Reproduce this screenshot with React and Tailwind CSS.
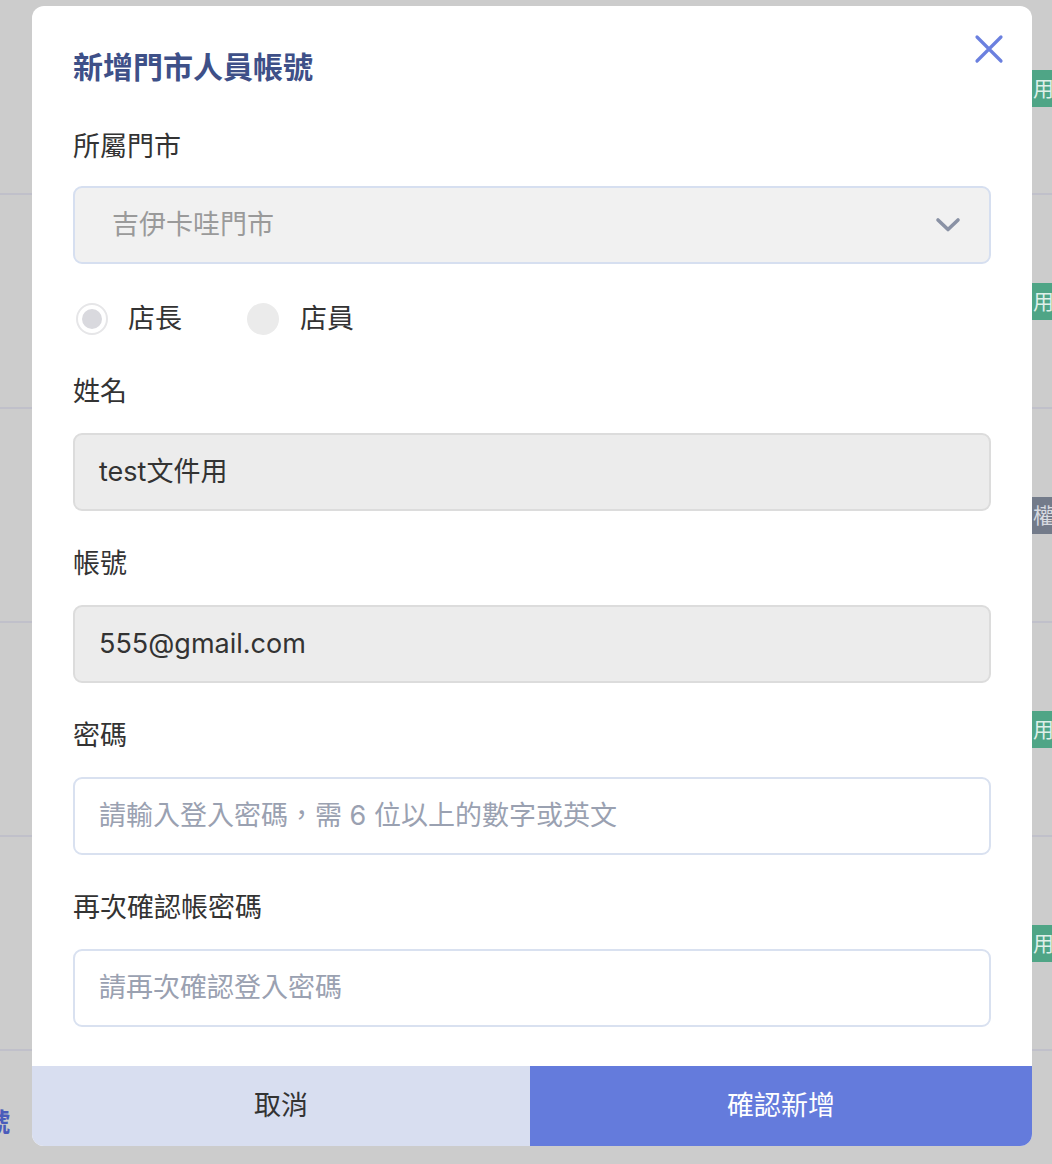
import React from "react";

const font = {
  fontFamily: '"Inter", "Noto Sans CJK TC", sans-serif',
};

function Badge({ text, gray }) {
  return (
    <div
      className={`h-[37px] w-[60px] flex items-center pl-[1px] text-[21px] leading-none ${
        gray ? "bg-[#737b8a] text-[#d7dae0]" : "bg-[#4fa586] text-[#dff0e9]"
      }`}
    >
      {text}
    </div>
  );
}

function BgRow({ h, badge, gray, children, last }) {
  return (
    <div
      className={`flex items-center ${last ? "" : "border-b-2 border-[#c0c0ca]"}`}
      style={{ height: h }}
    >
      <div className="flex-1">{children}</div>
      {badge && (
        <div className="w-[20px] overflow-hidden">
          <Badge text={badge} gray={gray} />
        </div>
      )}
    </div>
  );
}

function Label({ children, mb = "mb-[23px]" }) {
  return (
    <div className={`h-[36px] leading-[36px] text-[27px] text-[#333333] ${mb}`}>
      {children}
    </div>
  );
}

export default function App() {
  return (
    <div
      className="relative w-[1052px] h-[1164px] overflow-hidden bg-[#cccccc]"
      style={font}
    >
      {/* background table */}
      <div className="flex flex-col">
        <div className="flex items-start h-[195px] border-b-2 border-[#c0c0ca]">
          <div className="flex-1" />
          <div className="w-[20px] overflow-hidden mt-[70px]">
            <Badge text="用" />
          </div>
        </div>
        <BgRow h={214} badge="用" />
        <BgRow h={214} badge="權" gray />
        <BgRow h={214} badge="用" />
        <BgRow h={214} badge="用" />
        <div className="h-[120px] flex items-center">
          <div className="-ml-[16px] pt-[22px] text-[26px] font-bold text-[#4a5cbb]">
            號
          </div>
        </div>
      </div>

      {/* modal */}
      <div className="absolute left-[32px] top-[6px] w-[1000px] h-[1140px] bg-white rounded-[12px] overflow-hidden flex flex-col">
        <div className="flex-1 px-[41px] pt-[43px] relative">
          <button className="absolute right-[27px] top-[27px] w-[32px] h-[32px] flex items-center justify-center">
            <svg width="30" height="30" viewBox="0 0 30 30">
              <path
                d="M3 3 L27 27 M27 3 L3 27"
                stroke="#6b80df"
                strokeWidth="3.2"
                strokeLinecap="round"
                fill="none"
              />
            </svg>
          </button>
          <div className="h-[36px] leading-[36px] text-[30px] font-bold text-[#3e5088] mb-[44px]">
            新增門市人員帳號
          </div>

          <Label mb="mb-[21px]">所屬門市</Label>
          <div className="h-[78px] rounded-[9px] border-2 border-[#d6dff0] bg-[#f1f1f1] flex items-center pl-[37px] pr-[28px]">
            <div className="flex-1 text-[27px] text-[#9a9a9a]">吉伊卡哇門市</div>
            <svg width="26" height="16" viewBox="0 0 26 16">
              <path
                d="M3 3 L13 12.5 L23 3"
                stroke="#8a92a5"
                strokeWidth="3.6"
                strokeLinecap="round"
                strokeLinejoin="round"
                fill="none"
              />
            </svg>
          </div>

          <div className="flex items-center h-[32px] mt-[39px] mb-[39px] text-[27px] text-[#333333]">
            <div className="flex items-center ml-[3px]">
              <div className="w-[32px] h-[32px] rounded-full border-2 border-[#e6e6e8] bg-white flex items-center justify-center">
                <div className="w-[20px] h-[20px] rounded-full bg-[#d9d9de]" />
              </div>
              <span className="ml-[20px]">店長</span>
            </div>
            <div className="flex items-center ml-[65px]">
              <div className="w-[32px] h-[32px] rounded-full bg-[#ebebeb]" />
              <span className="ml-[21px]">店員</span>
            </div>
          </div>

          <Label>姓名</Label>
          <div className="h-[78px] rounded-[9px] border-2 border-[#dcdcdc] bg-[#ececec] flex items-center pl-[24px] text-[27px] text-[#333333]">
            test文件用
          </div>

          <div className="h-[35px]" />
          <Label>帳號</Label>
          <div className="h-[78px] rounded-[9px] border-2 border-[#dcdcdc] bg-[#ececec] flex items-center pl-[24px] text-[27px] text-[#333333]">
            555@gmail.com
          </div>

          <div className="h-[35px]" />
          <Label>密碼</Label>
          <div className="h-[78px] rounded-[9px] border-2 border-[#d9e1f0] bg-white flex items-center pl-[24px] text-[27px] text-[#9aa1b1]">
            請輸入登入密碼，需 6 位以上的數字或英文
          </div>

          <div className="h-[35px]" />
          <Label>再次確認帳密碼</Label>
          <div className="h-[78px] rounded-[9px] border-2 border-[#d9e1f0] bg-white flex items-center pl-[24px] text-[27px] text-[#9aa1b1]">
            請再次確認登入密碼
          </div>
        </div>

        <div className="flex h-[80px] text-[27px]">
          <button className="w-[498px] bg-[#d8def0] text-[#333333] flex items-center justify-center">
            取消
          </button>
          <button className="flex-1 bg-[#647bdc] text-white flex items-center justify-center">
            確認新增
          </button>
        </div>
      </div>
    </div>
  );
}
